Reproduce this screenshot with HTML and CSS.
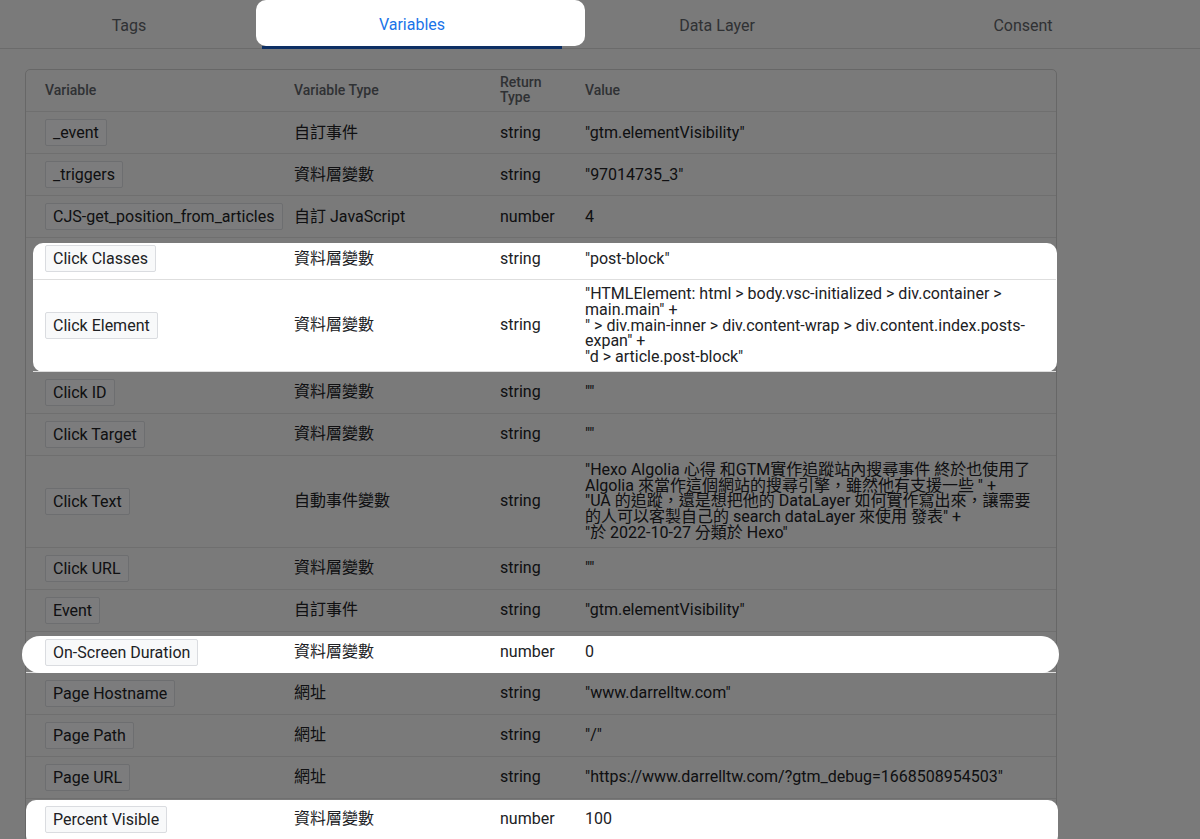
FILE: index.html
```html
<!DOCTYPE html>
<html lang="zh-Hant">
<head>
<meta charset="utf-8">
<title>Variables</title>
<link rel="stylesheet" href="styles.css">
</head>
<body>
<nav class="tabs">
  <div class="tab">Tags</div>
  <div class="tab active"><span class="tab-label spot spot-tab">Variables</span></div>
  <div class="tab">Data Layer</div>
  <div class="tab">Consent</div>
</nav>

<main class="content">
  <div class="vtable">
    <div class="row head">
      <div>Variable</div>
      <div>Variable Type</div>
      <div>Return<br>Type</div>
      <div>Value</div>
    </div>

    <div class="row">
      <div><span class="chip">_event</span></div>
      <div>自訂事件</div>
      <div>string</div>
      <div>"gtm.elementVisibility"</div>
    </div>
    <div class="row">
      <div><span class="chip">_triggers</span></div>
      <div>資料層變數</div>
      <div>string</div>
      <div>"97014735_3"</div>
    </div>
    <div class="row">
      <div><span class="chip">CJS-get_position_from_articles</span></div>
      <div>自訂 JavaScript</div>
      <div>number</div>
      <div>4</div>
    </div>

    <div class="spot spot-group">
      <div class="row">
        <div><span class="chip">Click Classes</span></div>
        <div>資料層變數</div>
        <div>string</div>
        <div>"post-block"</div>
      </div>
      <div class="row tall">
        <div><span class="chip">Click Element</span></div>
        <div>資料層變數</div>
        <div>string</div>
        <div class="multi">"HTMLElement: html &gt; body.vsc-initialized &gt; div.container &gt;<br>main.main" +<br>" &gt; div.main-inner &gt; div.content-wrap &gt; div.content.index.posts-<br>expan" +<br>"d &gt; article.post-block"</div>
      </div>
    </div>

    <div class="row">
      <div><span class="chip">Click ID</span></div>
      <div>資料層變數</div>
      <div>string</div>
      <div>""</div>
    </div>
    <div class="row">
      <div><span class="chip">Click Target</span></div>
      <div>資料層變數</div>
      <div>string</div>
      <div>""</div>
    </div>
    <div class="row tall">
      <div><span class="chip">Click Text</span></div>
      <div>自動事件變數</div>
      <div>string</div>
      <div class="multi">"Hexo Algolia 心得 和GTM實作追蹤站內搜尋事件 終於也使用了<br>Algolia 來當作這個網站的搜尋引擎，雖然他有支援一些 " +<br>"UA 的追蹤，還是想把他的 DataLayer 如何實作寫出來，讓需要<br>的人可以客製自己的 search dataLayer 來使用 發表" +<br>"於 2022-10-27 分類於 Hexo"</div>
    </div>
    <div class="row">
      <div><span class="chip">Click URL</span></div>
      <div>資料層變數</div>
      <div>string</div>
      <div>""</div>
    </div>
    <div class="row">
      <div><span class="chip">Event</span></div>
      <div>自訂事件</div>
      <div>string</div>
      <div>"gtm.elementVisibility"</div>
    </div>
    <div class="row spot spot-pill">
      <div><span class="chip">On-Screen Duration</span></div>
      <div>資料層變數</div>
      <div>number</div>
      <div>0</div>
    </div>
    <div class="row">
      <div><span class="chip">Page Hostname</span></div>
      <div>網址</div>
      <div>string</div>
      <div>"www.darrelltw.com"</div>
    </div>
    <div class="row">
      <div><span class="chip">Page Path</span></div>
      <div>網址</div>
      <div>string</div>
      <div>"/"</div>
    </div>
    <div class="row">
      <div><span class="chip">Page URL</span></div>
      <div>網址</div>
      <div>string</div>
      <div>"https://www.darrelltw.com/?gtm_debug=1668508954503"</div>
    </div>
    <div class="row spot spot-last">
      <div><span class="chip">Percent Visible</span></div>
      <div>資料層變數</div>
      <div>number</div>
      <div>100</div>
    </div>
  </div>
</main>

<div class="overlay"></div>
</body>
</html>
```

FILE: styles.css
```css
html, body {
  margin: 0;
  padding: 0;
  height: 100%;
  overflow: hidden;
}

body {
  background: #f4f4f4;
  color: #202124;
  font-family: Roboto, "Noto Sans CJK TC", "Noto Sans", sans-serif;
  font-size: 16px;
}

/* ---------- tabs ---------- */
.tabs {
  display: grid;
  grid-template-columns: 258px 300px 302px 302px;
  column-gap: 4px;
  height: 49px;
  border-bottom: 1px solid #d6d6d6;
  box-sizing: border-box;
}

.tab {
  display: flex;
  align-items: center;
  justify-content: center;
  height: 49px;
  box-sizing: border-box;
  color: #5f6368;
  font-size: 16px;
  padding-top: 2px;
}

.tab.active {
  border-bottom: 3px solid #1a5ec8;
  padding-top: 0;
  color: #1a73e8;
}

.tab-label {
  display: flex;
  align-items: center;
  justify-content: center;
  width: 100%;
  height: 100%;
  padding-top: 3px;
  box-sizing: border-box;
}

/* ---------- table ---------- */
.content {
  padding: 20px 0 0 25px;
}

.vtable {
  width: 1032px;
  box-sizing: border-box;
  border: 1px solid #cfcfcf;
  border-radius: 5px;
  background: #f4f4f4;
}

.row {
  display: grid;
  grid-template-columns: 249px 206px 85px 1fr;
  align-items: center;
  padding: 7px 20px 7px 19px;
  border-bottom: 1px solid #dedede;
  line-height: 20px;
}

.row.head {
  padding-top: 5px;
  padding-bottom: 6px;
  font-size: 14px;
  font-weight: 500;
  color: #5f6368;
  line-height: 15px;
}

.row.head > div {
  min-height: 30px;
  display: flex;
  align-items: center;
}

.row.tall {
  padding-top: 6px;
  padding-bottom: 6px;
}

.chip {
  display: inline-block;
  height: 27px;
  line-height: 25px;
  box-sizing: border-box;
  padding: 0 7px;
  border: 1px solid #dadce0;
  border-radius: 2px;
  background: #f8f9fa;
  white-space: nowrap;
}

.multi {
  line-height: 15.75px;
  white-space: nowrap;
}

/* ---------- dim overlay + spotlights ---------- */
.overlay {
  position: fixed;
  inset: 0;
  background: rgba(0, 0, 0, 0.5);
  z-index: 10;
}

.spot {
  position: relative;
  z-index: 11;
}

.spot::before {
  content: "";
  position: absolute;
  z-index: -1;
  background: #fff;
}

.spot-tab::before {
  top: 0;
  bottom: 0;
  left: -6px;
  right: -23px;
  border-radius: 10px;
}

/* rows inside the grouped spotlight start where the light starts */
.spot-group > .row {
  margin-left: 7px;
  padding-left: 12px;
}

.spot-group::before {
  top: 5px;
  bottom: 0;
  left: 7px;
  right: -1px;
  border-radius: 10px;
}

.spot-pill {
  padding-bottom: 6px;
}

.spot-pill::before {
  top: 4px;
  bottom: -1px;
  left: -4px;
  right: -3px;
  border-radius: 18px;
}

.spot-last::before {
  top: 1px;
  bottom: -6px;
  left: 0;
  right: -2px;
  border-radius: 10px;
}
```
